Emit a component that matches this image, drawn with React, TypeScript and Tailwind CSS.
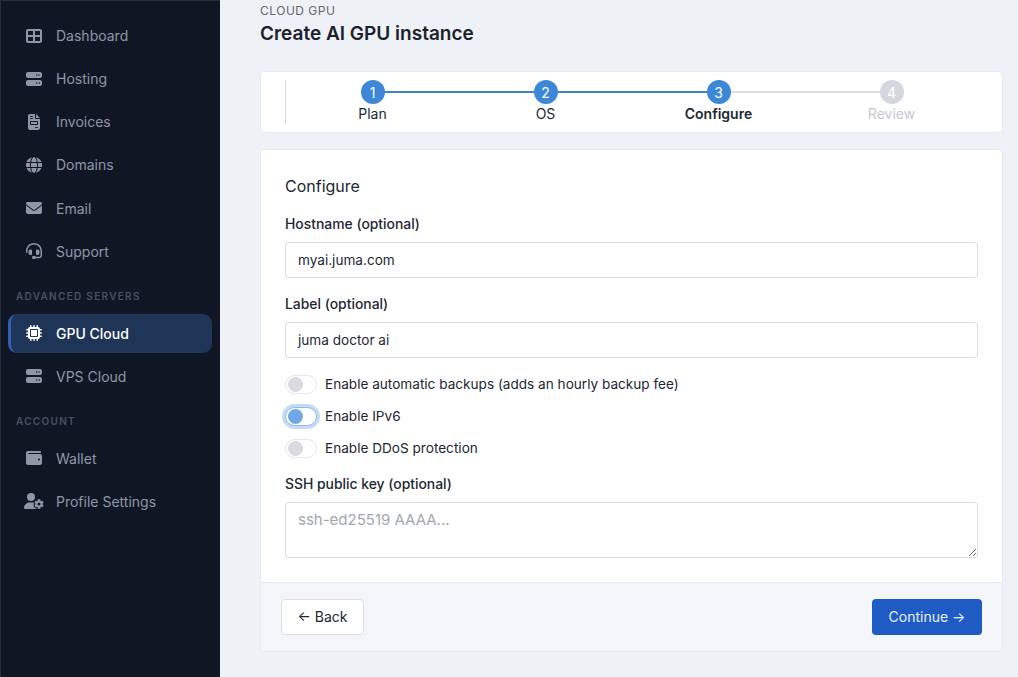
import type { ReactNode } from 'react'
import { FaEnvelope, FaFileInvoice, FaGlobe, FaHeadset, FaMicrochip, FaServer, FaTableCellsLarge, FaUserGear, FaWallet } from 'react-icons/fa6'

// Sidebar rows, grouped by section
const mainNav = [
    { label: 'Dashboard', icon: <FaTableCellsLarge className="h-4 w-4" /> },
    { label: 'Hosting', icon: <FaServer className="h-4 w-4" /> },
    { label: 'Invoices', icon: <FaFileInvoice className="h-4 w-4" /> },
    { label: 'Domains', icon: <FaGlobe className="h-4 w-4" /> },
    { label: 'Email', icon: <FaEnvelope className="h-4 w-4" /> },
    { label: 'Support', icon: <FaHeadset className="h-4 w-4" /> },
]

const steps = [
    { n: 1, label: 'Plan', state: 'done' },
    { n: 2, label: 'OS', state: 'done' },
    { n: 3, label: 'Configure', state: 'current' },
    { n: 4, label: 'Review', state: 'todo' },
]

function NavItem({ icon, label, active }: { icon: ReactNode; label: string; active?: boolean }) {
    return (
        <div
            className={
                active
                    ? 'flex h-[39.1px] items-center rounded-[9px] border-l-[3px] border-[#2d5fb4] bg-[#1e3558] pl-[13px] text-[14px] font-medium text-white'
                    : 'flex h-[39.1px] items-center pl-[16px] text-[14px] text-[#8f96a8]'
            }
        >
            <span className="mr-[12px] flex w-[20px] shrink-0 items-center justify-center">{icon}</span>
            {label}
        </div>
    )
}

function SectionLabel({ children }: { children: ReactNode }) {
    return <div className="pl-2 text-[10px] font-semibold leading-[12px] tracking-[1.3px] text-[#4a5060]">{children}</div>
}

function Step({ n, label, state, index }: { n: number; label: string; state: string; index: number }) {
    const blue = 'h-[2px] flex-1 bg-[#3f84c4]'
    const grey = 'h-[2px] flex-1 bg-[#dcdee2]'
    return (
        <div className="flex flex-col items-center">
            <div className="flex w-full items-center">
                <div className={index === 0 ? 'h-[2px] flex-1' : state === 'todo' ? grey : blue} />
                <div
                    className={
                        state === 'todo'
                            ? 'flex h-6 w-6 items-center justify-center rounded-full bg-[#d4d7dd] text-[14px] text-white'
                            : 'flex h-6 w-6 items-center justify-center rounded-full bg-[#3d87d8] text-[14px] text-white'
                    }
                >
                    {n}
                </div>
                <div className={index === 3 ? 'h-[2px] flex-1' : state === 'done' ? blue : grey} />
            </div>
            <div
                className={
                    state === 'current'
                        ? 'text-[14px] font-semibold leading-5 text-[#212733]'
                        : state === 'todo'
                          ? 'text-[14px] leading-5 text-[#c4c8cf]'
                          : 'text-[14px] leading-5 text-[#212733]'
                }
            >
                {label}
            </div>
        </div>
    )
}

function Toggle({ label, on }: { label: string; on?: boolean }) {
    return (
        <div className="flex h-[32px] items-center text-[13.6px] text-[#212733]">
            <div
                className={
                    on
                        ? 'flex h-[19px] w-[32px] items-center rounded-full border border-[#8fb8ea] bg-white pl-[2px] shadow-[0_0_0_3px_rgba(61,135,216,0.3)]'
                        : 'flex h-[19px] w-[32px] items-center rounded-full border border-[#e3e5e9] bg-white pl-[2px]'
                }
            >
                <div className={on ? 'h-[15px] w-[15px] rounded-full bg-[#6fa8e6]' : 'h-[15px] w-[15px] rounded-full bg-[#d9dbdf]'} />
            </div>
            <span className="ml-2">{label}</span>
        </div>
    )
}

function Field({ label, value }: { label: string; value: string }) {
    return (
        <div>
            <div className="mb-2 text-[13.9px] font-medium leading-[20px] text-[#212733]">{label}</div>
            <div className="flex h-[36px] items-center rounded-[4px] border border-[#d9dce1] bg-white px-3 text-[13.6px] text-[#212733]">{value}</div>
        </div>
    )
}

export default function App() {
    return (
        <div className="flex h-[677px] w-[1018px] overflow-hidden bg-[#eef1f6] font-['Inter',sans-serif]">
            {/* Sidebar */}
            <aside className="flex w-[220px] shrink-0 flex-col border-t border-l border-[#2a2f3d] bg-[#111625] pt-[15.1px] pr-2 pl-[7px]">
                <div className="flex flex-col gap-1">
                    {mainNav.map((item) => (
                        <NavItem key={item.label} icon={item.icon} label={item.label} />
                    ))}
                </div>
                <div className="mt-[19px] mb-[12px]">
                    <SectionLabel>ADVANCED SERVERS</SectionLabel>
                </div>
                <div className="flex flex-col gap-1">
                    <NavItem icon={<FaMicrochip className="h-4 w-4" />} label="GPU Cloud" active />
                    <NavItem icon={<FaServer className="h-4 w-4" />} label="VPS Cloud" />
                </div>
                <div className="mt-[19px] mb-[12px]">
                    <SectionLabel>ACCOUNT</SectionLabel>
                </div>
                <div className="flex flex-col gap-1">
                    <NavItem icon={<FaWallet className="h-4 w-4" />} label="Wallet" />
                    <NavItem icon={<FaUserGear className="h-4 w-5" />} label="Profile Settings" />
                </div>
            </aside>

            {/* Main */}
            <main className="flex min-w-0 flex-1 flex-col pt-[3px] pr-[15px] pl-[40px]">
                <div className="text-[12px] leading-[15px] tracking-[0.5px] text-[#5f6672]">CLOUD GPU</div>
                <h1 className="mt-[2px] text-[19px] leading-[28px] font-semibold text-[#1b212c]">Create AI GPU instance</h1>

                <div className="mt-[23px] h-[62px] rounded-[4px] border border-[#e6e9ee] bg-white px-6 pt-2">
                    <div className="grid h-[44px] grid-cols-4 border-l border-[#d5d8dd]">
                        {steps.map((s, i) => (
                            <Step key={s.n} n={s.n} label={s.label} state={s.state} index={i} />
                        ))}
                    </div>
                </div>

                <div className="mt-[16px] flex h-[503px] flex-col rounded-[4px] border border-[#e6e9ee] bg-white">
                    <div className="flex-1 px-6 pt-[26px]">
                        <div className="text-[16px] leading-[20px] text-[#212733]">Configure</div>
                        <div className="mt-[18px]"><Field label="Hostname (optional)" value="myai.juma.com" /></div>
                        <div className="mt-[16px]"><Field label="Label (optional)" value="juma doctor ai" /></div>
                        <div className="mt-[10px]">
                            <Toggle label="Enable automatic backups (adds an hourly backup fee)" />
                            <Toggle label="Enable IPv6" on />
                            <Toggle label="Enable DDoS protection" />
                        </div>
                        <div className="mt-[10px] mb-2 text-[13.9px] font-medium leading-[20px] text-[#212733]">SSH public key (optional)</div>
                        <textarea
                            readOnly
                            placeholder="ssh-ed25519 AAAA..."
                            className="block h-[56px] w-full rounded-[4px] border border-[#d9dce1] bg-white px-3 py-[6px] text-[15px] placeholder:text-[#a2a7b0]"
                        />
                    </div>
                    <div className="flex h-[69px] items-center justify-between rounded-b-[4px] border-t border-[#e3e6ea] bg-[#f3f5f9] px-5 pb-[1px]">
                        <button className="flex h-[36px] w-[83px] items-center justify-center rounded-[4px] border border-[#dcdfe4] bg-white text-[14px] text-[#212733]">
                            ← Back
                        </button>
                        <button className="flex h-[36px] w-[110px] items-center justify-center rounded-[4px] bg-[#1e5cc4] text-[14px] text-[#e8f0ff]">
                            Continue →
                        </button>
                    </div>
                </div>
            </main>
        </div>
    )
}
